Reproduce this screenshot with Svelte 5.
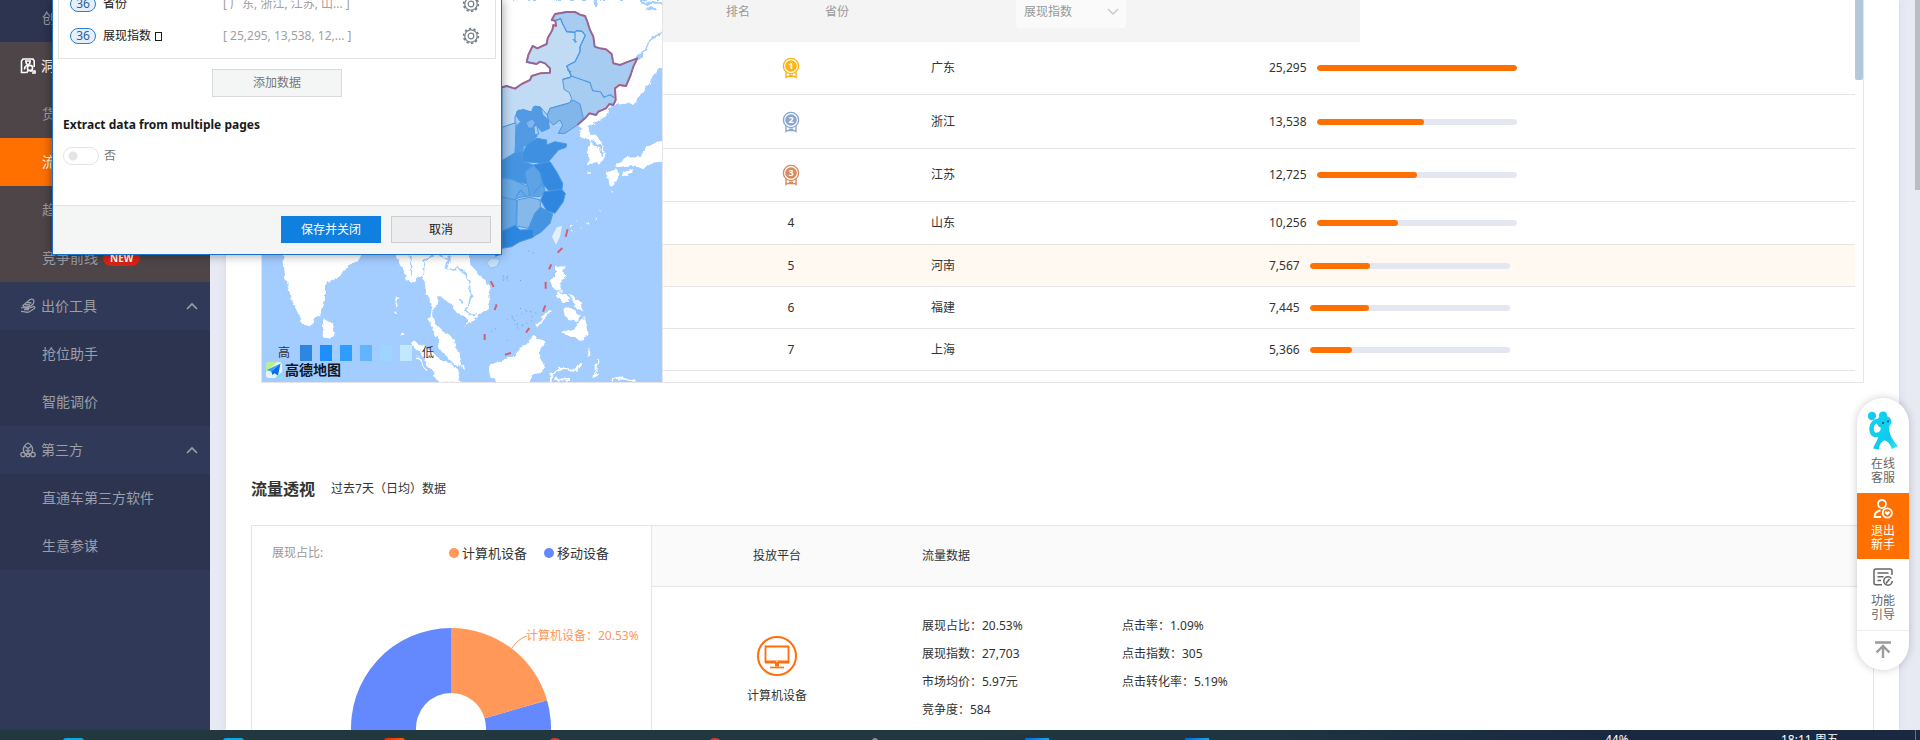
<script>
  const ranking = [
    { rank: 1, name: '广东', value: 25295, size: 'first', color: '#fdb515' },
    { rank: 2, name: '浙江', value: 13538, size: 'tall', color: '#8ba6d0' },
    { rank: 3, name: '江苏', value: 12725, size: 'first', color: '#d68b62' },
    { rank: 4, name: '山东', value: 10256, size: 'mid' },
    { rank: 5, name: '河南', value: 7567, size: 'low', active: true },
    { rank: 6, name: '福建', value: 7445, size: 'low' },
    { rank: 7, name: '上海', value: 5366, size: 'low' }
  ];
  const top = ranking[0].value;
  const fields = [
    { count: 36, name: '省份', sample: '广东, 浙江, 江苏, 山...' },
    { count: 36, name: '展现指数', sample: '25,295, 13,538, 12,...', box: true }
  ];
  const scale = ['#2d87e2', '#1e8ffa', '#2f9cff', '#62b4ff', '#9cd5ff', '#c2e8ff'];
  const metrics = [
    ['展现占比：20.53%', '点击率：1.09%'],
    ['展现指数：27,703', '点击指数：305'],
    ['市场均价：5.97元', '点击转化率：5.19%'],
    ['竞争度：584', '']
  ];
  const provinces = [
    ['#c1dbf5', '6,262 20,258 45,266 65,252 90,240 95,228 120,220 150,218 150,205 135,190 120,185 110,192 80,186 85,165 98,138 112,145 140,132 143,115 157,90 160,75 168,78 166,62 182,56 188,72 200,95 225,97 230,92 246,94 256,106 240,140 240,155 225,185 200,198 214,230 188,238 192,268 208,278 215,295 210,308 150,325 142,345 120,320 100,320 95,335 55,330 45,350 45,370 6,382'],
    ['#82b5e9', '142,345 150,325 205,310 220,300 240,312 250,355 232,375 195,400 175,400 188,375 180,360 160,375 145,360'],
    ['#529ae3', '50,335 70,328 95,338 105,318 122,322 128,345 145,360 148,385 125,395 115,382 102,375 112,400 110,410 95,425 70,440 68,460 45,455 48,380 62,365 50,350'],
    ['#82b5e9', '78,368 96,356 106,368 98,384 84,384'],
    ['#a8cdf1', '102,382 110,374 116,402 104,404'],
    ['#9cc5ef', '6,382 48,368 46,440 45,458 38,478 6,482'],
    ['#4594e2', '6,482 45,458 68,458 70,485 100,495 75,515 82,552 50,545 36,538 6,532'],
    ['#3f90e1', '68,460 80,435 110,415 140,420 140,435 165,425 200,432 198,442 175,450 150,480 135,495 110,488 68,485'],
    ['#358ae0', '100,495 150,485 170,515 188,550 185,575 150,575 130,555 120,520'],
    ['#5ea3e6', '75,515 100,498 118,515 125,545 135,570 120,590 88,588 82,560'],
    ['#2f86df', '122,600 132,575 185,568 196,580 190,605 165,640 140,632'],
    ['#6aabe8', '6,535 36,538 50,545 85,560 88,588 60,592 40,600 6,590'],
    ['#66a8e7', '6,592 50,600 48,678 6,694'],
    ['#86b8ea', '52,600 90,592 120,600 122,620 105,640 85,685 50,678'],
    ['#4594e2', '105,640 122,622 158,642 150,670 125,695 100,710 85,688'],
    ['#2d86df', '6,694 45,675 60,690 100,688 100,712 60,725 35,740 6,745']
  ];
  const border = '6,262 20,258 45,266 65,252 90,240 95,228 120,220 150,218 150,205 135,190 120,185 110,192 80,186 85,165 98,138 112,145 140,132 143,115 157,90 160,75 168,78 166,62 155,60 165,42 200,36 225,36 240,44 255,48 262,65 270,90 280,110 284,140 300,145 318,148 335,162 340,190 360,195 385,185 412,175 400,200 392,225 378,258 358,255 345,265 347,300 340,315 328,312 318,325 295,335 288,345 268,340 255,355 232,375';
  const format = (n) => n.toLocaleString('en-US');
</script>

{#snippet chevronUp()}
  <svg class="chevron" viewBox="0 0 12 8" width="12" height="8"><path d="M1 7l5-5 5 5" fill="none" stroke="currentColor" stroke-width="1.7" /></svg>
{/snippet}

<div class="screen">
  <div class="workspace">
    <nav class="sidebar">
      <a class="item" href="#create">创意优化</a>
      <div class="group current">
        <button class="head bright">
          <svg viewBox="0 0 16 16" width="16" height="16" fill="none" stroke="currentColor" stroke-width="1.6">
            <path d="M3 14.5H1.5V3L3 1h10l1.2 2v6M2 14.5h4M5 3h6M6 3.5c0 2 1 3 2 3s2-1 2-3M8 7c-2.500.5-3.500 2-3.500 4.500" />
            <circle cx="10" cy="10" r="2.600" /><path d="M8.500 12l-2 3M10 13h5v2h-3" />
          </svg>洞察中心
        </button>
        <a class="item" href="#goods">货品洞察</a>
        <a class="item selected" href="#flow">流量解析</a>
        <a class="item" href="#trend">趋势洞察</a>
        <a class="item" href="#rival">竞争前线<span class="new">NEW</span></a>
      </div>
      <button class="head">
        <svg viewBox="0 0 16 16" width="16" height="16" fill="none" stroke="currentColor" stroke-width="1.300">
          <path d="M3 7.500L10 1.500c2-.8 4 0 4 2 0 3-4 5.500-7 5.500H4zM5 6.500l5 .5M7.500 4.500l4 .5M1 10c3-1.500 6 1 9 0l4-1.500c1.500.5 1 2-1 3l-4 2.500c-3 1-5-1-8-.500M4 11.500h5" />
        </svg>出价工具{@render chevronUp()}
      </button>
      <div class="group">
        <a class="item" href="#grab">抢位助手</a>
        <a class="item" href="#bid">智能调价</a>
      </div>
      <button class="head">
        <svg viewBox="0 0 16 16" width="16" height="16" fill="none" stroke="currentColor" stroke-width="1.300">
          <path d="M4.500 11C1.500 6 5 2.500 8 1c3 1.500 6.500 5 3.500 10M5 4.500l3 2 3-2M8 6v5M5.500 8l2.500 1.500L10.500 8M5 12h6" />
          <circle cx="3" cy="12.500" r="2.200" /><circle cx="13" cy="12.500" r="2.200" /><circle cx="8" cy="13" r="1.800" />
        </svg>第三方{@render chevronUp()}
      </button>
      <div class="group">
        <a class="item" href="#soft">直通车第三方软件</a>
        <a class="item" href="#advisor">生意参谋</a>
      </div>
    </nav>

    <main>
      <section class="panel">
        <div class="map">
          <svg viewBox="0 0 400 382" width="400" height="382">
            <defs>
              <filter id="coast" x="0" y="0" width="1" height="1" color-interpolation-filters="sRGB">
                <feTurbulence type="fractalNoise" baseFrequency="0.16" numOctaves="2" seed="4" />
                <feDisplacementMap in="SourceGraphic" scale="6" xChannelSelector="R" yChannelSelector="G" />
              </filter>
            </defs>
            <rect width="400" height="382" fill="#a3ccff" />
            <g filter="url(#coast)">
              <rect width="400" height="382" fill="#a3ccff" />
              <g transform="translate(238 0) scale(.33333)">
                <path fill="#fff" d="M0 0H490V192L470 215 455 238 440 260 425 282 408 303 380 314 355 308 325 325 322 345 290 365 262 385 285 405 305 430 316 465 310 480 298 490 262 492 266 460 262 440 274 425 240 410 236 400 245 385 232 375 6 380H0z" />
                <path fill="#fff" d="M320 518L350 506 358 525 345 555 330 562 322 540zM342 498L375 475 420 470 440 440 490 418V485L450 488 430 508 400 495 350 502zM365 515L402 505 400 516 370 530z" />
                <path fill="#fff" d="M165 798L193 800 195 830 178 850 186 878 165 872 152 845 165 830zM190 930L212 920 242 945 230 965 205 960zM188 995L225 985 240 958 256 955 266 1000 245 1024 220 1010 188 1002zM172 880L195 882 212 900 185 908zM205 880L246 908 248 935 228 925z" />
                <path fill="none" stroke="#fff" stroke-width="6" d="M108 978L150 932M152 1150L154 1118 180 1106 230 1110 242 1090M298 1078L288 1100 284 1130 296 1120M160 1136L210 1140M335 1142L370 1132 408 1146M268 1045V1070" />
                <path fill="none" stroke="#a3ccff" stroke-width="7" d="M490 96L468 108 446 122 436 150 428 166 408 172M420 0L445 12 486 10M440 22L470 28M284 0L292 18M276 425L300 440 306 470" />
                <path fill="none" stroke="#fff" stroke-width="4" stroke-dasharray="5 22" d="M215 696L245 682 280 660 296 650 310 615M335 575L345 560M210 680L230 660M262 516L275 516" />
              </g>
              <g transform="translate(-22 240) scale(.33333)">
                <path fill="#fff" d="M128 30H372L355 62 325 76 300 106 275 120 255 135V180L246 215 225 236 210 262 195 258 175 225 155 182 135 112zM250 234L275 248 286 280 268 298 248 292z" />
                <path fill="#fff" d="M466 30H690V72L715 100 746 136 754 180 746 202 710 230 678 254 680 236 650 218 635 195 620 180 595 168 590 195 576 222 582 248 606 272 642 296 656 340 664 380 640 370 600 330 590 290 575 262 565 242 580 200 560 162 550 106 538 112 516 130 497 122 495 95 480 75z" />
                <path fill="#fff" d="M510 306L550 314 602 362 640 372 652 388 662 428H598L570 385 545 345zM745 378L770 368 820 352 880 288 916 306 895 340 916 385 880 405 865 430H770L750 405z" />
                <path fill="none" stroke="#fff" stroke-width="5" d="M472 170L468 205M530 350L560 392M668 375L672 388M466 215L465 222M484 285L490 280" />
                <path fill="none" stroke="#a3ccff" stroke-width="5" d="M630 46L618 90 660 84 686 120 692 170 688 195 678 208 690 224 706 226M508 44L515 108M582 44L552 62 550 105M598 46L632 62M656 176L672 190" />
              </g>
            </g>
            <g transform="translate(238 0) scale(.33333)" stroke-linejoin="round">
              <polygon points={border + ' 6,382'} fill="#a6ccf1" />
              {#each provinces as [fill, points]}
                <polygon {points} {fill} stroke="#4b98e2" stroke-width="3" />
              {/each}
              <path fill="none" stroke="#4b98e2" stroke-width="3.500" d="M166 62L182 56 188 72 200 95 225 97 230 92 246 94 256 106 240 140 240 155 225 185 200 198 214 228 248 240 270 248 278 272 302 276 312 292 330 284 344 294M225 98V128M218 118L230 126M202 210L214 216M188 238L212 232M48 592L62 570 78 590M100 582L125 552" />
              <polyline points={border} fill="none" stroke="#c96b7c" stroke-width="6" />
              <polyline points={border} fill="none" stroke="#846aa5" stroke-width="4" />
              <path fill="#e2effc" d="M170 682L186 678 180 710 168 734 156 710z" />
              <path stroke="#d0606f" stroke-width="6" d="M203 688L197 710M187 744L173 758M154 793L147 808M137 846V866M136 916L129 935M88 984L78 998M15 1064L33 1059" />
              <path fill="none" stroke="#5fa7ee" stroke-width="3" stroke-dasharray="3 13" d="M10 830L30 845M8 838L26 828M20 960L90 930 100 960 50 985 35 945 60 990M60 925L110 940M85 752V760M100 758V764M20 1020L30 1030M70 975L40 965" />
            </g>
            <g transform="translate(-22 240) scale(.33333)">
              <path fill="#c5dff8" stroke="#7fb6ee" stroke-width="2" d="M740 68L755 54 780 58 772 78 752 85z" />
              <path fill="#2d86df" d="M765 35H782V44L766 50z" />
              <path stroke="#d0606f" stroke-width="6" d="M752 124L761 141M770 193L764 210M734 282V300" />
              <path fill="none" stroke="#5fa7ee" stroke-width="3" stroke-dasharray="4 9" d="M788 108L806 118M790 122L806 104M754 276L772 262M840 120L846 128" />
            </g>
          </svg>
          <div class="scale">
            <span>高</span>
            {#each scale as color}<i style="background:{color}"></i>{/each}
            <span class="end">低</span>
          </div>
          <div class="brand">
            <svg viewBox="0 0 16 16" width="16" height="16">
              <rect width="16" height="16" rx="3" fill="#e7f5f1" /><path d="M0 3q0-3 3-3h8L0 10z" fill="#b9ef8c" /><path d="M9 16l7-6v3q0 3-3 3z" fill="#6fe0fa" />
              <path d="M14.500 1.500L.8 8l4.500 1.800z" fill="#2fa2ff" /><path d="M14.500 1.500L5.300 9.800 6.500 13l2-1.800 3.500 2.300z" fill="#0b6cf0" />
            </svg>高德地图
          </div>
        </div>

        <div class="ranks">
          <div class="columns">
            <div class="rank-head">
              <span>排名</span><span class="province">省份</span>
              <label class="metric">
                <select aria-label="指标"><option>展现指数</option></select>
                <svg viewBox="0 0 12 8" width="12" height="8"><path d="M1 1l5 5 5-5" fill="none" stroke="#c6c6c6" stroke-width="1.300" /></svg>
              </label>
            </div>
            <table>
              <tbody>
                {#each ranking as row}
                  <tr class={row.size} class:active={row.active}>
                    <td class="rank">
                      {#if row.color}
                        <svg class="medal" viewBox="0 0 18 22" width="18" height="22" aria-label={String(row.rank)}>
                          <path d="M4 14v6.500l1.500-1h7l1.500 1V14" fill="none" stroke={row.color} stroke-width="1.400" />
                          <path d="M7 17.500h4v1.500H7z" fill={row.color} />
                          <circle cx="9" cy="9" r="7.600" fill="#fff" stroke={row.color} stroke-width="1.400" />
                          <circle cx="9" cy="9" r="5.800" fill={row.color} />
                          <text x="9" y="12" text-anchor="middle" font-size="9" font-weight="700" fill="#fff">{row.rank}</text>
                        </svg>
                      {:else}{row.rank}{/if}
                    </td>
                    <td class="name">{row.name}</td>
                    <td><div class="value">{format(row.value)}<span class="bar"><i style="width:{(row.value / top) * 100}%"></i></span></div></td>
                  </tr>
                {/each}
              </tbody>
            </table>
          </div>
          <div class="rail"><i></i></div>
        </div>
      </section>

      <h2>流量透视<small>过去7天（日均）数据</small></h2>

      <section class="insight">
        <div class="share">
          <div class="legend">
            <span class="caption">展现占比:</span>
            <span class="key"><i class="pc"></i>计算机设备</span>
            <span class="key"><i class="mobile"></i>移动设备</span>
          </div>
          <svg class="donut" viewBox="0 0 399 250" width="399" height="250">
            <path fill="#6489ff" d="M295.100 121.300A100 100 0 1 1 199 49V114A35 35 0 1 0 232.600 139.300z" />
            <path fill="#ff9858" d="M199 49A100 100 0 0 1 295.100 121.300L232.600 139.300A35 35 0 0 0 199 114z" />
            <path fill="none" stroke="#ff9858" d="M260 69Q267 59 275 57" />
            <text x="274" y="61" font-size="12" fill="#ff9858">计算机设备：20.53%</text>
          </svg>
        </div>
        <table class="traffic">
          <thead><tr><th class="platform">投放平台</th><th class="data">流量数据</th></tr></thead>
          <tbody>
            <tr>
              <td class="platform">
                <svg viewBox="0 0 42 42" width="42" height="42" fill="none" stroke="#ff6e0d">
                  <circle cx="21" cy="21" r="19" stroke-width="2" />
                  <path d="M9.500 11.500h23v16h-23z" stroke-width="1.800" stroke-linejoin="round" />
                  <path d="M10 25.500h22v2.500H10zM19 28h4v3.500h-4z" fill="#ff6e0d" stroke="none" /><path d="M14 32.500h14" stroke-width="1.600" />
                  <circle cx="21" cy="26.500" r=".8" fill="#fff" stroke="none" />
                </svg>
                计算机设备
              </td>
              <td class="data">
                <div class="grid">
                  {#each metrics as [left, right]}<span>{left}</span><span>{right}</span>{/each}
                </div>
              </td>
            </tr>
          </tbody>
        </table>
      </section>
    </main>
    <div class="gutter"><i></i></div>

    <aside class="float">
      <button class="service">
        <svg viewBox="0 0 32 40" width="32" height="40">
          <defs><linearGradient id="toy" x1="0" y1="0" x2="1" y2="1"><stop offset="0" stop-color="#08dcf5" /><stop offset=".6" stop-color="#12c7ea" /><stop offset="1" stop-color="#35eaff" /></linearGradient></defs>
          <g fill="url(#toy)"><circle cx="5" cy="5" r="4.200" /><circle cx="16" cy="4.500" r="4" /><ellipse cx="17" cy="11" rx="7.500" ry="6.500" />
            <path d="M14 15L22 14C21.500 22 25 29 31 35L25 38C22.500 31 18 27 15 31 13 33 12 35 12 38.500L6 37.500C9 31 13.500 24 14 15z" /></g>
          <path d="M11 10C3 10 2.500 24 9 24 14 24 17 19 18 14" fill="none" stroke="#0fd0ee" stroke-width="4.500" stroke-linecap="round" />
          <circle cx="9.500" cy="17.500" r="2.600" fill="#fff" />
          <circle cx="16" cy="12" r="1" fill="#134b66" /><circle cx="21" cy="10.500" r="1" fill="#134b66" />
        </svg>
        <span>在线<br />客服</span>
      </button>
      <button class="exit">
        <svg viewBox="0 0 20 20" width="20" height="20" fill="none" stroke="#fff" stroke-width="1.800">
          <circle cx="9" cy="5" r="4" /><path d="M7.500 11.500C4 12 1.500 14.500 1.500 18H8" /><circle cx="14.300" cy="14" r="4.600" />
          <path d="M14.300 16.600l-2.500-2.500c-.5-2 1.800-2.500 2.500-.9.700-1.600 3-1.100 2.500.9z" fill="#fff" stroke="none" />
        </svg>
        <span>退出<br />新手</span>
      </button>
      <button class="guide">
        <svg viewBox="0 0 20 20" width="20" height="20" fill="none" stroke="#666" stroke-width="1.500">
          <path d="M9 17.800H3q-2 0-2-2V4q0-2 2-2h14q2 0 2 2v4M4.500 6h11M4.500 9.800h6M4.500 13.600H8" /><circle cx="15" cy="14" r="4.200" stroke-dasharray="23 3" /><path d="M13 16.500l3.500-4.500" />
        </svg>
        <span>功能<br />引导</span>
      </button>
      <button class="top" aria-label="返回顶部">
        <svg viewBox="0 0 18 18" width="18" height="18" fill="none" stroke="#9b9b9b" stroke-width="2.400"><path d="M1 1.500h16M9 17V6M2.500 11.500L9 5l6.500 6.500" /></svg>
      </button>
    </aside>

    <div class="dialog" role="dialog" aria-label="数据提取">
      <ul>
        {#each fields as field}
          <li>
            <b class="count">{field.count}</b>
            <span class="field">{field.name}{#if field.box}<i></i>{/if}</span>
            <span class="sample">[ {field.sample} ]</span>
            <button class="gear" aria-label="设置">
              <svg viewBox="0 0 18 18" width="18" height="18" fill="none" stroke="#75808a" stroke-width="1.200">
                <circle cx="9" cy="9" r="6.200" /><circle cx="9" cy="9" r="2.800" />
                <circle cx="9" cy="9" r="7.300" stroke-width="1.800" stroke-dasharray="2.300 2.286" />
              </svg>
            </button>
          </li>
        {/each}
      </ul>
      <button class="add">添加数据</button>
      <h3>Extract data from multiple pages</h3>
      <label class="toggle"><input type="checkbox" />否</label>
      <footer><button class="save">保存并关闭</button><button class="cancel">取消</button></footer>
    </div>
  </div>

  <div class="taskbar">
    <i class="app" style="left:63px"></i><i class="app" style="left:223px"></i>
    <i class="app hot" style="left:384px"></i>
    <i class="app round" style="left:547px"></i><i class="app round" style="left:707px"></i>
    <i class="app grey" style="left:872px"></i>
    <i class="app blue" style="left:1025px"></i><i class="app blue" style="left:1185px"></i>
    <span class="battery">44%</span><span class="clock">18:11 周五</span><span class="desk"></span>
  </div>
</div>

<style>
  :global(body) { margin: 0; overflow: hidden; }
  .screen { height: 100vh; display: flex; flex-direction: column; color: #333; background: #e7eaf3; font: 12px/18px "Noto Sans", "Noto Sans CJK SC", sans-serif; }
  .screen :global(*) { box-sizing: border-box; }
  button, select { font: inherit; color: inherit; border: 0; padding: 0; background: none; }
  svg { display: block; flex: none; }
  table { border-collapse: separate; border-spacing: 0; width: 100%; }
  td, th { padding: 0; font-weight: 400; text-align: left; }
  .workspace { flex: 1; min-height: 0; display: flex; overflow: hidden; position: relative; }

  .sidebar { width: 210px; flex: none; background: #303957; color: #9c9fa8; font-size: 14px; display: flex; flex-direction: column; }
  .sidebar > .item:first-child { margin-top: -6px; }
  .item { height: 48px; flex: none; padding-left: 42px; display: flex; align-items: center; background: #2d3450; color: inherit; text-decoration: none; }
  .head { width: 100%; height: 48px; flex: none; padding: 0 12px 0 20px; display: flex; align-items: center; gap: 5px; text-align: left; }
  .chevron { margin-left: auto; }
  .current, .current .item { background: #4e4549; }
  .current .item.selected { background: #ff7000; color: #fff; }
  .bright { color: #fff; }
  .new { margin-left: 5px; padding: 0 7px; border-radius: 8px; background: #d92214; color: #fff; font: 700 10px/16px "Noto Sans", sans-serif; }

  main { flex: 1; min-width: 0; margin-left: 16px; padding: 0 25px; background: #fff; box-shadow: 0 0 8px #d5d9e6; }
  .gutter { width: 21px; flex: none; display: flex; justify-content: flex-end; }
  .gutter i { width: 5px; height: 190px; background: #bcbdc0; }
  .panel { margin: 0 10px; display: flex; border: solid #e5e5e5; border-width: 0 1px 1px; overflow: hidden; }
  .map { width: 400px; height: 382px; flex: none; position: relative; }
  .scale { position: absolute; left: 16px; top: 344px; display: flex; gap: 8px; align-items: center; }
  .scale i { width: 12px; height: 16px; }
  .scale span { margin-right: 2px; }
  .scale .end { margin-left: 2px; }
  .brand { position: absolute; left: 4px; top: 361px; display: flex; gap: 3px; align-items: center; color: #0d1826; font-size: 14px; font-weight: 700; }
  .ranks { flex: 1; min-width: 0; display: flex; border-left: 1px solid #e5e5e5; }
  .columns { flex: 1; min-width: 0; }
  .rail { width: 8px; }
  .rail i { display: block; height: 80px; background: #b3c8d9; border-radius: 0 0 2px 2px; }
  .rank-head { width: 58.5%; height: 60px; margin-top: -18px; padding-left: 63px; display: flex; align-items: center; background: #f4f4f4; color: #999; }
  .province { margin-left: 75px; }
  .metric { position: relative; margin-left: 167px; }
  .metric select { display: block; width: 110px; height: 32px; padding: 0 8px; border-radius: 4px; background: #fafafa; appearance: none; }
  .metric svg { position: absolute; right: 7px; top: 12px; }
  .ranks td { height: 42px; border-bottom: 1px solid #e5e5e5; }
  .ranks .first td { height: 53px; }
  .ranks .tall td { height: 54px; }
  .ranks .mid td { height: 43px; }
  .ranks tr.active { background: #fff9f2; }
  .rank { width: 256px; text-align: center; }
  .medal { margin: 0 auto; }
  .name { width: 350px; padding-left: 12px; }
  .value { display: flex; align-items: center; gap: 10px; }
  .bar { width: 200px; height: 6px; border-radius: 3px; background: #e4e7f0; overflow: hidden; }
  .bar i { display: block; height: 100%; border-radius: 3px; background: #ff7000; }

  h2 { margin: 94px 0 24px; font-size: 16px; line-height: 24px; display: flex; align-items: center; gap: 16px; }
  h2 small { font-size: 12px; font-weight: 400; }
  .insight { display: flex; border: 1px solid #e5e5e5; }
  .share { width: 400px; flex: none; border-right: 1px solid #e5e5e5; }
  .legend { height: 54px; padding: 0 42px 0 20px; display: flex; align-items: center; gap: 17px; font-size: 13px; }
  .caption { flex: 1; color: #999; font-size: 12px; }
  .key { display: flex; align-items: center; gap: 3px; }
  .key i { width: 10px; height: 10px; border-radius: 50%; background: #ff9858; }
  .key .mobile { background: #6489ff; }
  .donut { margin-top: -1px; }
  .traffic { flex: 1; }
  .traffic th { height: 61px; background: #fafafa; border-bottom: 1px solid #e5e5e5; }
  .traffic td { vertical-align: top; }
  .traffic .platform { width: 250px; text-align: center; }
  .traffic td.platform { padding-top: 48px; }
  td.platform svg { margin: 0 auto 10px; }
  .data { padding-left: 20px; }
  td.data { padding-top: 25px; }
  .grid { display: grid; grid-template-columns: 200px 1fr; line-height: 28px; }

  .float { position: absolute; right: 11px; top: 398px; width: 52px; border-radius: 26px; background: #fff; box-shadow: 0 0 8px #0003; overflow: hidden; color: #666; line-height: 14px; }
  .float button { width: 100%; display: flex; flex-direction: column; align-items: center; }
  .float .service { height: 95px; padding-top: 13px; gap: 6px; }
  .float .exit { height: 66px; padding-top: 6px; gap: 5px; background: #ff7000; color: #fff; }
  .float .guide { height: 72px; padding-top: 8px; gap: 7px; border-bottom: 1px solid #eee; }
  .float .top { height: 39px; padding-top: 10px; }

  .dialog { position: absolute; left: 52px; top: 0; width: 450px; border: solid #1a71c5; border-width: 0 1px 1px; background: #fff; box-shadow: 0 0 10px #0006; color: #1a1a1a; }
  .dialog ul { margin: 0 5px; padding: 0 0 6px; height: 59px; display: flex; flex-direction: column; justify-content: flex-end; border: solid #e2e3e4; border-width: 0 1px 1px; list-style: none; }
  .dialog li { height: 32px; flex: none; padding: 0 15px 0 11px; display: flex; align-items: center; }
  .count { width: 26px; height: 16px; margin-right: 7px; border: 1px solid #2b7ed2; border-radius: 8px; background: #e5effa; color: #2463a8; font-weight: 400; line-height: 14px; text-align: center; }
  .field { width: 120px; display: flex; align-items: center; gap: 4px; }
  .field i { width: 7px; height: 9px; border: 1px solid #1a1a1a; }
  .sample { flex: 1; color: #a0a0a0; }
  .add { display: block; width: 130px; height: 28px; margin: 10px auto 0 159px; border: 1px solid #d8dbde; background: #f4f6f6; color: #777; }
  h3 { margin: 18px 0 12px 10px; font-size: 12px; line-height: 20px; }
  .toggle { margin-left: 10px; height: 18px; display: flex; align-items: center; gap: 5px; color: #777; }
  .toggle input { appearance: none; width: 36px; height: 18px; margin: 0; border: 1px solid #e3e3e3; border-radius: 9px; background: radial-gradient(circle at 9px 8px, #e4e4e4 4px, #fff 5px); }
  .dialog footer { margin-top: 40px; height: 49px; padding: 10px 10px 0; border-top: 1px solid #e2e3e4; background: #f4f6f6; display: flex; justify-content: flex-end; gap: 10px; }
  .dialog footer button { width: 100px; height: 27px; }
  .save { background: #0f7fe0; color: #fff; }
  .dialog .cancel { border: 1px solid #cccdd0; background: #ededf0; }

  .taskbar { position: relative; height: 10px; overflow: hidden; background: linear-gradient(90deg, #22373e 50%, #1e3540 65%, #1a2842 85%); color: #fff; }
  .app { position: absolute; top: 8px; width: 21px; height: 20px; border-radius: 3px; background: #08aae8; }
  .hot { background: linear-gradient(90deg, #f02208, #f66200); }
  .round { width: 16px; height: 16px; border-radius: 8px; background: #dc3b33; }
  .grey { width: 6px; background: #87939a; }
  .blue { width: 24px; border-radius: 0; background: linear-gradient(90deg, #0067e4, #20a5ec); }
  .battery, .clock { position: absolute; top: 1px; }
  .battery { left: 1605px; }
  .clock { left: 1781px; }
  .desk { position: absolute; left: 1915px; height: 10px; border-left: 1px solid #687386; }
</style>
